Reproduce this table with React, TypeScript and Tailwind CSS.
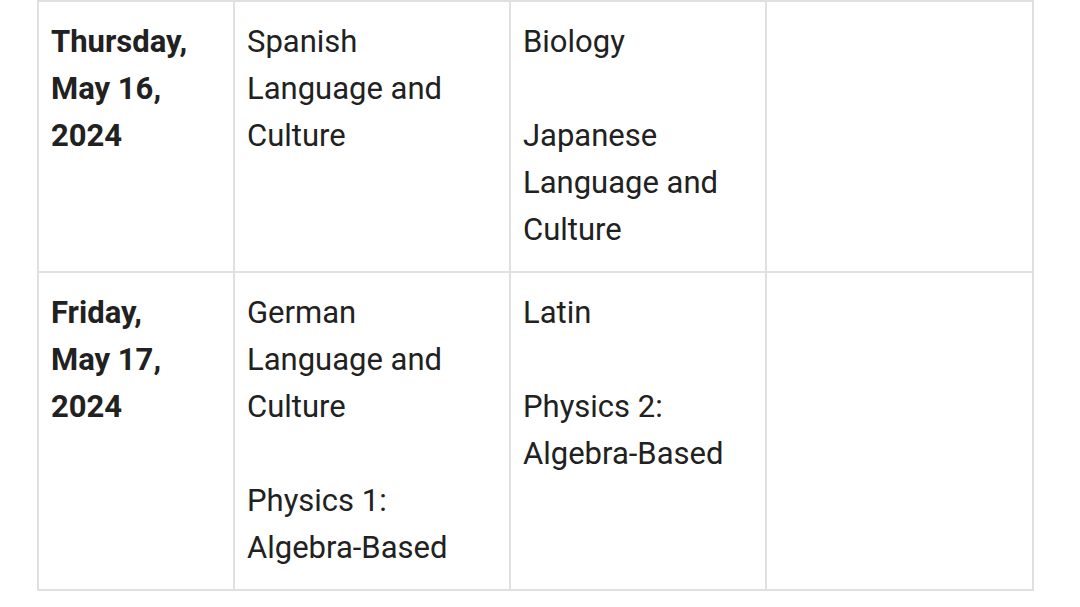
const rows = [
  {
    date: ["Thursday,", "May 16,", "2024"],
    morning: ["Spanish Language and Culture"],
    afternoon: ["Biology", "Japanese Language and Culture"],
  },
  {
    date: ["Friday,", "May 17,", "2024"],
    morning: ["German Language and Culture", "Physics 1: Algebra-Based"],
    afternoon: ["Latin", "Physics 2: Algebra-Based"],
  },
];

function Exams({ items }: { items: string[] }) {
  return (
    <div className="space-y-[47px]">
      {items.map((t) => (
        <p key={t}>{t}</p>
      ))}
    </div>
  );
}

export default function App() {
  return (
    <div className="w-[1080px] h-[607px] bg-white pl-[37px] font-['Roboto',sans-serif] text-[31px] leading-[47px] text-[#212121]">
      <table className="border-collapse table-fixed w-[995px]">
        <colgroup>
          <col className="w-[196px]" />
          <col className="w-[276px]" />
          <col className="w-[256px]" />
          <col className="w-[267px]" />
        </colgroup>
        <tbody>
          {rows.map((r) => (
            <tr key={r.date[0]}>
              <td className="border-2 border-[#e0e0e0] align-top pl-[12px] pr-3 pt-[16px] pb-[18px] font-bold">
                {r.date.map((d) => (
                  <div key={d}>{d}</div>
                ))}
              </td>
              <td className="border-2 border-[#e0e0e0] align-top pl-[12px] pr-3 pt-[16px] pb-[18px]">
                <Exams items={r.morning} />
              </td>
              <td className="border-2 border-[#e0e0e0] align-top pl-[12px] pr-3 pt-[16px] pb-[18px]">
                <Exams items={r.afternoon} />
              </td>
              <td className="border-2 border-[#e0e0e0] align-top pl-[12px] pr-3 pt-[16px] pb-[18px]"></td>
            </tr>
          ))}
        </tbody>
      </table>
    </div>
  );
}
